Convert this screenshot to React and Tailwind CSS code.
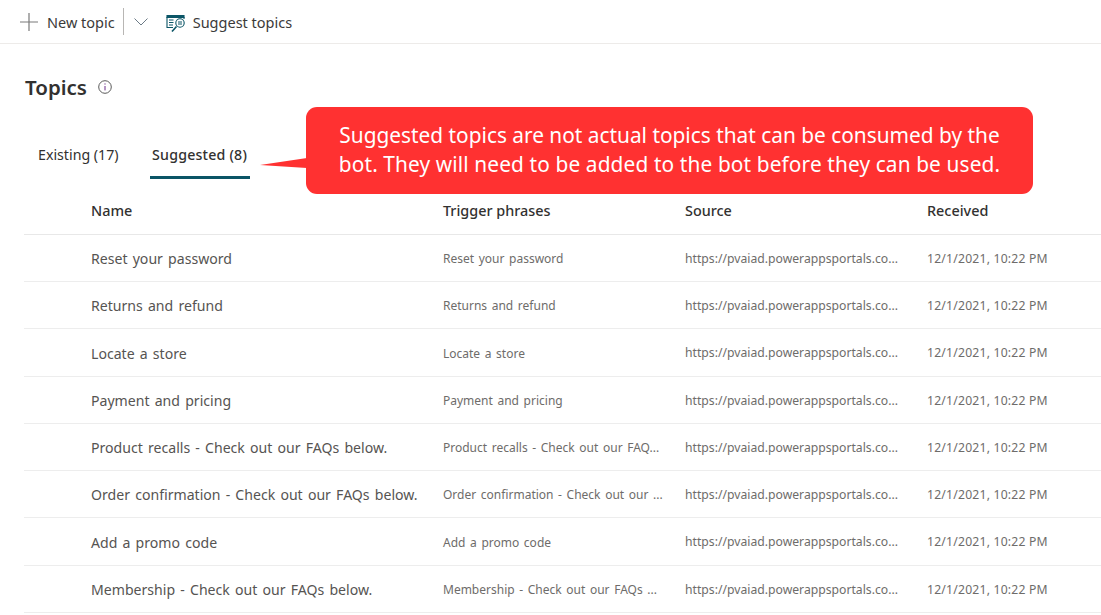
import React from 'react';

const rows = [
  { name: 'Reset your password', phrase: 'Reset your password' },
  { name: 'Returns and refund', phrase: 'Returns and refund' },
  { name: 'Locate a store', phrase: 'Locate a store' },
  { name: 'Payment and pricing', phrase: 'Payment and pricing' },
  { name: 'Product recalls - Check out our FAQs below.', phrase: 'Product recalls - Check out our FAQ...' },
  { name: 'Order confirmation - Check out our FAQs below.', phrase: 'Order confirmation - Check out our ...' },
  { name: 'Add a promo code', phrase: 'Add a promo code' },
  { name: 'Membership - Check out our FAQs below.', phrase: 'Membership - Check out our FAQs ...' },
];

const font = { fontFamily: '"Noto Sans", "Open Sans", sans-serif' };

function SuggestIcon() {
  return (
    <svg width="20" height="18" viewBox="0 0 20 18" fill="none" stroke="#0b5566" strokeWidth="1.1">
      <path d="M1 1.5h17v2H1z" fill="#0b5566" />
      <path d="M1 3v10.5h6M18 3v2" />
      <path d="M3 6h4.5M3 8.5h4.5M3 11h4" />
      <circle cx="14" cy="9" r="4.2" />
      <path d="M12 8h4M12 10h4" />
      <path d="M10.5 12.5l-4.5 5" strokeWidth="1.6" />
    </svg>
  );
}

export default function App() {
  return (
    <div className="relative h-[615px] w-[1101px] overflow-hidden bg-white text-[#323130]" style={font}>
      {/* command bar */}
      <div className="flex h-[44px] items-center border-b border-[#edebe9] pl-[20px] text-[14.5px]">
        <svg width="18" height="18" viewBox="0 0 18 18" stroke="#7a7a7a" strokeWidth="1.2">
          <path d="M9 0v18M0 9h18" />
        </svg>
        <span className="ml-[9px] mt-[2px] text-[#3b3a39]">New topic</span>
        <div className="ml-[8px] h-[27px] w-px bg-[#b8b6b4]" />
        <svg className="ml-[10px]" width="14" height="8" viewBox="0 0 14 8" fill="none" stroke="#6b7a86" strokeWidth="1">
          <path d="M0.5 0.5L7 7l6.5-6.5" />
        </svg>
        <div className="ml-[18px] mt-[3px]"><SuggestIcon /></div>
        <span className="ml-[7px] mt-[2px] text-[#3b3a39]">Suggest topics</span>
      </div>

      {/* heading */}
      <div className="flex h-[87px] items-center pl-[25px]">
        <h1 className="text-[20.5px] font-semibold">Topics</h1>
        <svg className="ml-[11px] mt-[-2px]" width="14" height="14" viewBox="0 0 14 14" fill="none">
          <circle cx="7" cy="7" r="6.3" stroke="#5a5a5a" />
          <path d="M7 6v4.4M7 3.4v1.2" stroke="#6b2c8a" />
        </svg>
      </div>

      {/* tabs */}
      <div className="flex h-[48px] pl-[38px] text-[14.2px]">
        <div className="pt-[13px]">Existing (17)</div>
        <div className="ml-[31px] flex w-[100px] flex-col items-center border-b-[3px] border-[#0b5566] pt-[13px] font-medium tracking-[0.2px]">
          Suggested (8)
        </div>
      </div>

      {/* table */}
      <div className="ml-[24px] mt-[8px]">
        <div className="flex h-[47.9px] items-center border-b border-[#e8e8e8] pt-[1px] text-[14.4px] font-medium">
          <div className="w-[419px] pl-[67px]">Name</div>
          <div className="w-[242px]">Trigger phrases</div>
          <div className="w-[242px]">Source</div>
          <div>Received</div>
        </div>
        {rows.map((row) => (
          <div key={row.name} className="flex h-[47.25px] items-center border-b border-[#ededed]">
            <div className="w-[419px] pl-[67px] pt-[1.5px] text-[14.1px] text-[#565452] [word-spacing:1.5px]">{row.name}</div>
            <div className="w-[242px] pt-[2px] text-[12px] text-[#6e6c6a] [word-spacing:1.5px]">{row.phrase}</div>
            <div className="w-[242px] pt-[2px] text-[12.2px] text-[#6e6c6a]">https://pvaiad.powerappsportals.co...</div>
            <div className="pt-[2px] text-[12.2px] tracking-[0.2px] text-[#6e6c6a]">12/1/2021, 10:22 PM</div>
          </div>
        ))}
      </div>

      {/* callout over the table */}
      <div className="absolute left-[306px] top-[107px] flex h-[87px] w-[727px] flex-col items-center justify-center rounded-[11px] bg-[#ff3131] pb-[1px] text-[20.85px] leading-[29px] text-white">
        <div>Suggested topics are not actual topics that can be consumed by the</div>
        <div className="tracking-[0.12px]">bot. They will need to be added to the bot before they can be used.</div>
      </div>
      <svg className="absolute left-[259px] top-[157px]" width="48" height="12" viewBox="0 0 48 12">
        <path d="M1 8L48 1v10z" fill="#ff3131" />
      </svg>
    </div>
  );
}
